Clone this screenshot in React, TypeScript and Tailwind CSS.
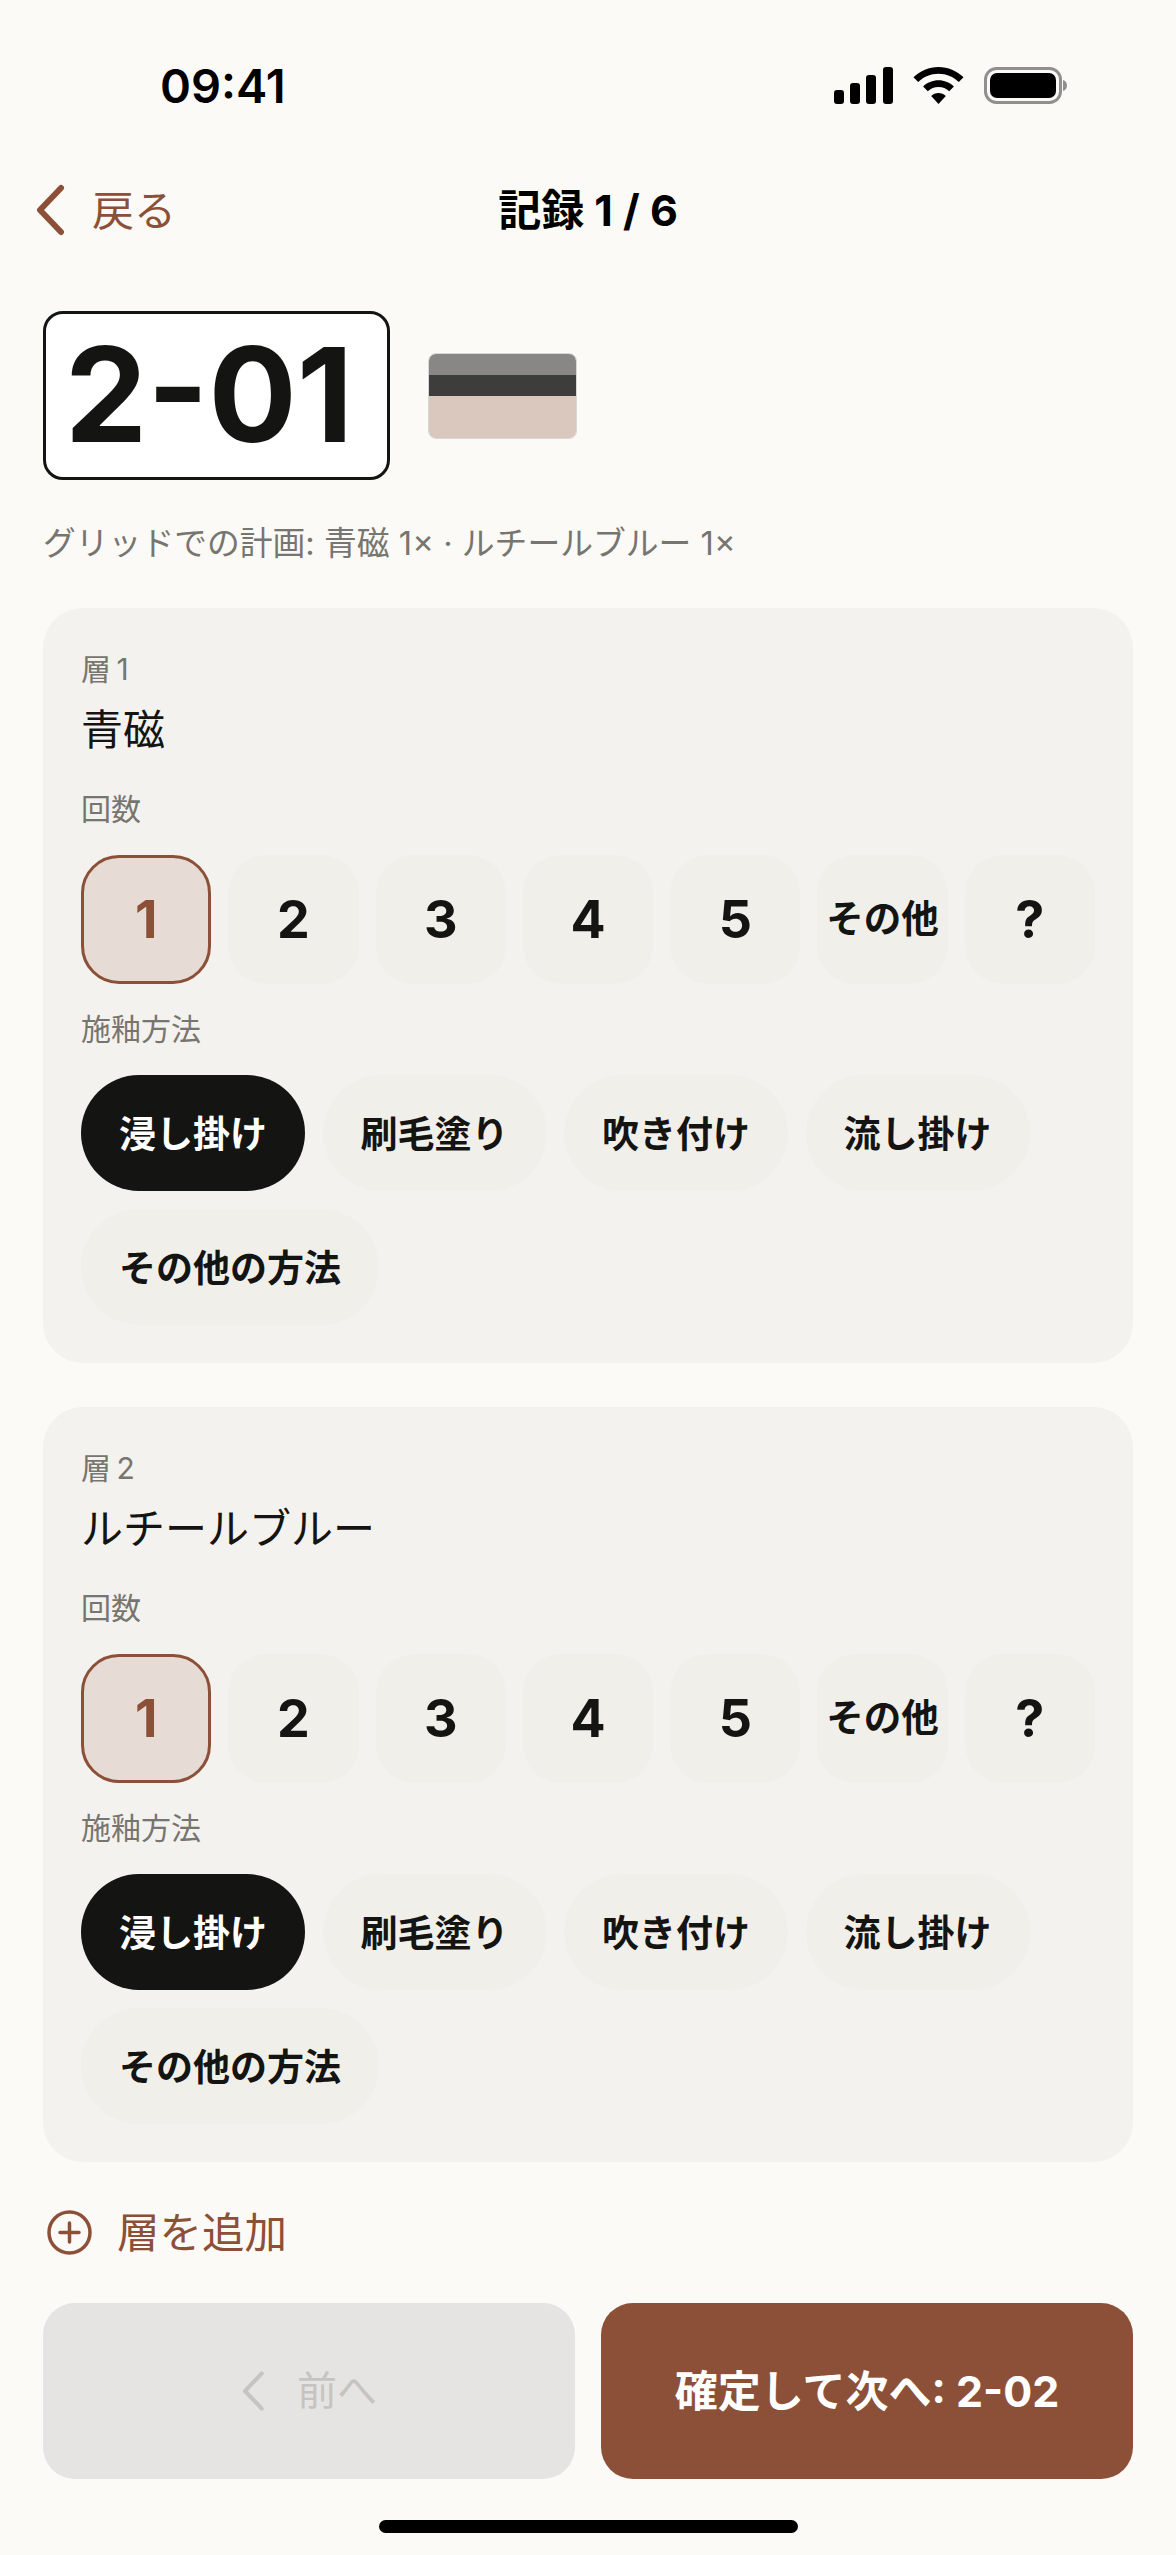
const FONT = "font-['Inter','Noto_Sans_CJK_JP',sans-serif]";

const counts = ["1", "2", "3", "4", "5", "その他", "?"];
const methods = ["浸し掛け", "刷毛塗り", "吹き付け", "流し掛け", "その他の方法"];
const layers = [
  { label: "層\u20091", name: "青磁" },
  { label: "層\u20092", name: "ルチールブルー" },
];

function StatusIcons() {
  return (
    <div className="flex items-center gap-[20px]">
      <svg width="59" height="37" viewBox="0 0 59 37" fill="#000">
        <rect x="0" y="23" width="10" height="14" rx="3" />
        <rect x="16" y="16" width="10" height="21" rx="3" />
        <rect x="32" y="8" width="10" height="29" rx="3" />
        <rect x="49" y="0" width="10" height="37" rx="3" />
      </svg>
      <svg width="51" height="37" viewBox="0 0 51 37" fill="#000">
        <path d="M25.5 0C35 0 43.8 3.8 50.5 10.2L45.8 15C40.4 9.9 33.3 6.8 25.5 6.8S10.6 9.9 5.2 15L.5 10.2C7.2 3.8 16 0 25.5 0Z" />
        <path d="M25.5 13.2c5.9 0 11.3 2.3 15.4 6.2l-4.7 4.8c-2.8-2.6-6.6-4.2-10.7-4.2s-7.9 1.6-10.7 4.2l-4.7-4.8c4.100-3.900 9.500-6.200 15.400-6.200Z" />
        <path d="M25.500 26c2.800 0 5.400 1.100 7.300 2.900L25.500 37l-7.300-8.100c1.900-1.800 4.500-2.900 7.300-2.900Z" />
      </svg>
      <svg width="83" height="37" viewBox="0 0 83 37">
        <rect x="1.500" y="1.500" width="75" height="34" rx="11" fill="none" stroke="#8f8f8d" strokeWidth="3" />
        <rect x="6" y="6" width="66" height="25" rx="7" fill="#000" />
        <path d="M79 13c2.500.8 4 3 4 5.500S81.500 23.200 79 24Z" fill="#8f8f8d" />
      </svg>
    </div>
  );
}

function Chevron({ className, width, height, color, stroke }: { className?: string; width: number; height: number; color: string; stroke: number }) {
  return (
    <svg className={className} width={width} height={height} viewBox="0 0 30 52" fill="none">
      <path d="M26 4 5 26l21 22" stroke={color} strokeWidth={stroke} strokeLinecap="round" strokeLinejoin="round" />
    </svg>
  );
}

function LayerCard({ label, name }: { label: string; name: string }) {
  return (
    <section className="rounded-[40px] bg-[#f4f2ee] px-[38px] pt-[41px] pb-[38px]">
      <div className="h-[40px] text-[30px] leading-[40px] text-[#77756f]">{label}</div>
      <div className="mt-[13px] h-[56px] text-[42px] leading-[56px] text-[#141412]">{name}</div>
      <div className="mt-[31px] h-[40px] text-[30px] leading-[40px] text-[#77756f]">回数</div>
      <div className="mt-[26px] grid grid-cols-7 gap-[17px]">
        {counts.map((c, i) => (
          <div
            key={c}
            className={
              i === 0
                ? "flex h-[129px] items-center justify-center rounded-[38px] border-[3.5px] border-[#8c5038] bg-[#e6dcd5] text-[52px] font-bold text-[#8c5038]"
                : c === "その他"
                  ? "flex h-[129px] items-center justify-center rounded-[38px] bg-[#f1efea] text-[37.5px] font-bold whitespace-nowrap text-[#141412]"
                  : "flex h-[129px] items-center justify-center rounded-[38px] bg-[#f1efea] text-[52px] font-bold text-[#141412]"
            }
          >
            {c}
          </div>
        ))}
      </div>
      <div className="mt-[25px] h-[40px] text-[30px] leading-[40px] text-[#77756f]">施釉方法</div>
      <div className="mt-[26px] flex flex-wrap gap-x-[17.5px] gap-y-[18px]">
        {methods.map((m, i) => (
          <div
            key={m}
            className={
              i === 0
                ? "flex h-[116px] items-center rounded-full bg-[#141412] px-[38px] pt-[3px] text-[37px] font-bold text-white"
                : "flex h-[116px] items-center rounded-full bg-[#f1efea] px-[38px] pt-[3px] text-[37px] font-bold text-[#141412]"
            }
          >
            {m}
          </div>
        ))}
      </div>
    </section>
  );
}

export default function App() {
  return (
    <div className={`${FONT} h-[2555px] w-[1176px] overflow-hidden bg-[#fbfaf6]`}>
      {/* Status bar */}
      <div className="flex h-[172px] items-start justify-between pt-[62px] pr-[109px] pl-[160px]">
        <span className="text-[47px] leading-[48px] font-semibold text-black">09:41</span>
        <div className="pt-[5px]">
          <StatusIcons />
        </div>
      </div>

      {/* Nav */}
      <div className="relative flex h-[76px] items-center justify-center">
        <div className="absolute left-[35px] flex items-center gap-[27px]">
          <Chevron width={30} height={52} color="#8c5038" stroke={6} />
          <span className="text-[42px] text-[#8c5038]">戻る</span>
        </div>
        <span className="pt-[1px] text-[43px] font-bold text-black">記録 1 / 6</span>
      </div>

      {/* Tile header */}
      <div className="mt-[63px] flex items-center gap-[38px] px-[43px]">
        <div className="flex h-[169px] w-[347px] items-center justify-center rounded-[20px] border-[3.5px] border-[#141412] bg-white pr-[15px] text-[131px] font-bold text-[#141412]">
          2-01
        </div>
        <div className="flex h-[86px] w-[149px] flex-col overflow-hidden rounded-[8px] border border-[#00000022]">
          <div className="h-[21px] bg-[#888785]" />
          <div className="h-[21px] bg-[#3d3d3b]" />
          <div className="flex-1 bg-[#dac7bd]" />
        </div>
      </div>
      <div className="mt-[40px] h-[46px] px-[43px] text-[32.8px] leading-[46px] text-[#77756f]">
        グリッドでの計画: 青磁 1× · ルチールブルー 1×
      </div>

      {/* Layers */}
      <div className="mt-[42px] flex flex-col gap-[44px] px-[43px]">
        {layers.map((l) => (
          <LayerCard key={l.label} label={l.label} name={l.name} />
        ))}
      </div>

      {/* Add layer */}
      <div className="mt-[48px] flex h-[45px] items-center gap-[25px] pl-[47px]">
        <svg width="45" height="45" viewBox="0 0 45 45" fill="none" stroke="#8c5038" strokeWidth="3.500" strokeLinecap="round">
          <circle cx="22.500" cy="22.500" r="20.500" />
          <path d="M22.500 13v19M13 22.500h19" />
        </svg>
        <span className="text-[42.5px] text-[#8c5038]">層を追加</span>
      </div>

      {/* Footer buttons */}
      <div className="mt-[48px] flex gap-[26px] px-[43px]">
        <div className="flex h-[176px] flex-1 items-center justify-center gap-[32px] rounded-[32px] bg-[#e5e4e2] text-[40px] text-[#c5c4c2]">
          <Chevron width={24} height={42} color="#c5c4c2" stroke={5} />
          <span>前へ</span>
        </div>
        <div className="flex h-[176px] flex-1 items-center justify-center rounded-[32px] bg-[#8c5038] text-[43px] font-bold text-white">
          確定して次へ: 2-02
        </div>
      </div>

      {/* Home indicator */}
      <div className="mt-[41px] flex justify-center">
        <div className="h-[13px] w-[419px] rounded-full bg-black" />
      </div>
    </div>
  );
}
